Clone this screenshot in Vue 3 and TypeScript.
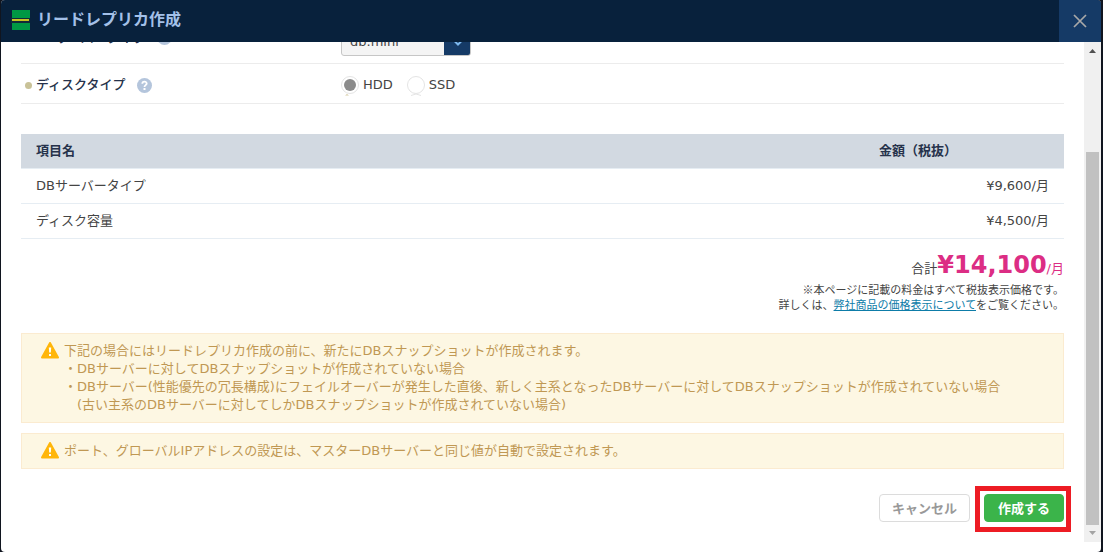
<script setup lang="ts">
import { ref } from 'vue'

interface PriceRow {
  name: string
  price: string
}

const serverType = ref<string>('db.mini')
const diskType = ref<string>('HDD')
const diskTypes: string[] = ['HDD', 'SSD']

const prices: PriceRow[] = [
  { name: 'DBサーバータイプ', price: '¥9,600/月' },
  { name: 'ディスク容量', price: '¥4,500/月' },
]
</script>

<template>
  <div class="backdrop">
    <section class="dialog" role="dialog" aria-labelledby="dialog-title">
      <header class="header">
        <svg class="logo" width="20" height="20" viewBox="0 0 20 20" aria-hidden="true">
          <rect x="1" y="0" width="18" height="8" fill="#009844" />
          <rect x="0" y="8" width="19" height="5" fill="#132a38" />
          <rect x="1" y="9" width="17" height="2" fill="#c5c522" />
          <rect x="1" y="13" width="18" height="7" fill="#009844" />
        </svg>
        <h1 id="dialog-title" class="title">リードレプリカ作成</h1>
        <button class="close" type="button" aria-label="閉じる">
          <svg width="14" height="14" viewBox="0 0 14 14" aria-hidden="true">
            <path d="M1 1L13 13M13 1L1 13" stroke="#a8a8a8" stroke-width="1.7" fill="none" />
          </svg>
        </button>
      </header>

      <div class="body">
        <div class="content">
          <div class="field field-scrolled">
            <div class="field-label field-label-top">
              <span class="dot"></span>
              <label for="server-type">DBサーバータイプ</label>
              <svg class="help" width="15" height="15" viewBox="0 0 15 15" aria-hidden="true">
                <circle cx="7.5" cy="7.5" r="7.5" fill="#b4c5dc" />
                <path d="M5.3 5.8C5.3 3 9.7 3 9.7 5.6C9.7 7.2 7.5 7.1 7.5 8.9" stroke="#fff" stroke-width="1.8" fill="none" />
                <rect x="6.5" y="10" width="2" height="2" fill="#fff" />
              </svg>
            </div>
            <div class="select">
              <select id="server-type" v-model="serverType">
                <option value="db.mini">db.mini</option>
              </select>
              <svg class="chevron" width="10" height="10" viewBox="0 0 10 10" aria-hidden="true">
                <path d="M1.5 3L5 6.5L8.5 3" stroke="#7db8ee" stroke-width="2" fill="none" />
              </svg>
            </div>
          </div>

          <div class="field" role="radiogroup" aria-labelledby="disk-label">
            <div class="field-label">
              <span class="dot"></span>
              <span id="disk-label">ディスクタイプ</span>
              <svg class="help" width="15" height="15" viewBox="0 0 15 15" aria-hidden="true">
                <circle cx="7.5" cy="7.5" r="7.5" fill="#b4c5dc" />
                <path d="M5.3 5.8C5.3 3 9.7 3 9.7 5.6C9.7 7.2 7.5 7.1 7.5 8.9" stroke="#fff" stroke-width="1.8" fill="none" />
                <rect x="6.5" y="10" width="2" height="2" fill="#fff" />
              </svg>
            </div>
            <label v-for="type in diskTypes" :key="type" class="radio">
              <input v-model="diskType" type="radio" name="disk" :value="type" />
              <svg width="18" height="22" viewBox="0 0 18 22" aria-hidden="true">
                <circle cx="9" cy="11" r="8.5" fill="#fff" stroke="#e4e4e4" />
                <template v-if="diskType === type">
                  <circle cx="9" cy="11" r="6" fill="#8b8b8b" />
                  <path d="M4 21.5L6 20L8 21.5" fill="#d5cba4" />
                </template>
                <path v-else d="M4 21.5Q9 18.5 14 21.5" stroke="#e4e4e4" fill="none" />
              </svg>
              <span>{{ type }}</span>
            </label>
          </div>

          <table class="prices">
            <thead>
              <tr>
                <th scope="col">項目名</th>
                <th scope="col" class="amount-head">金額（税抜）</th>
              </tr>
            </thead>
            <tbody>
              <tr v-for="row in prices" :key="row.name">
                <td>{{ row.name }}</td>
                <td class="amount">{{ row.price }}</td>
              </tr>
            </tbody>
          </table>

          <p class="total">合計<span class="pink"><strong>¥14,100</strong>/月</span></p>
          <p class="tax">
            ※本ページに記載の料金はすべて税抜表示価格です。<br />
            詳しくは、<a href="#">弊社商品の価格表示について</a>をご覧ください。
          </p>

          <div class="notice">
            <svg class="warn" width="18" height="17" viewBox="0 0 18 17" aria-hidden="true">
              <path d="M9 1L17 15.5H1Z" fill="#ffb60a" stroke="#ffb60a" stroke-width="2" stroke-linejoin="round" />
              <path d="M7.8 5.5H10.2L9.8 10.5H8.2Z" fill="#fff" />
              <rect x="8" y="12" width="2" height="2" fill="#fff" />
            </svg>
            <div>
              <p>下記の場合にはリードレプリカ作成の前に、新たにDBスナップショットが作成されます。</p>
              <p>・DBサーバーに対してDBスナップショットが作成されていない場合</p>
              <p>・DBサーバー(性能優先の冗長構成)にフェイルオーバーが発生した直後、新しく主系となったDBサーバーに対してDBスナップショットが作成されていない場合</p>
              <p class="indent">(古い主系のDBサーバーに対してしかDBスナップショットが作成されていない場合)</p>
            </div>
          </div>
          <div class="notice">
            <svg class="warn" width="18" height="17" viewBox="0 0 18 17" aria-hidden="true">
              <path d="M9 1L17 15.5H1Z" fill="#ffb60a" stroke="#ffb60a" stroke-width="2" stroke-linejoin="round" />
              <path d="M7.8 5.5H10.2L9.8 10.5H8.2Z" fill="#fff" />
              <rect x="8" y="12" width="2" height="2" fill="#fff" />
            </svg>
            <p>ポート、グローバルIPアドレスの設定は、マスターDBサーバーと同じ値が自動で設定されます。</p>
          </div>

          <div class="actions">
            <button class="btn cancel" type="button">キャンセル</button>
            <div class="marked">
              <button class="btn create" type="button">作成する</button>
            </div>
          </div>
        </div>

        <div class="scrollbar" aria-hidden="true">
          <svg width="17" height="17" viewBox="0 0 17 17"><path d="M5 11L8.5 7L12 11Z" fill="#505050" /></svg>
          <div class="track"><div class="thumb"></div></div>
          <svg width="17" height="17" viewBox="0 0 17 17"><path d="M5 6L8.5 10L12 6Z" fill="#a3a3a3" /></svg>
        </div>
      </div>
    </section>
  </div>
</template>

<style>
body {
  margin: 0;
}
</style>

<style scoped>
.backdrop {
  display: flex;
  box-sizing: border-box;
  min-height: 100vh;
  padding: 0 2px 0 1px;
  background: #10151f;
  color: #444;
  font: 13px/18px "DejaVu Sans", "Noto Sans CJK JP", sans-serif;
}
.dialog {
  display: flex;
  flex: 1;
  flex-direction: column;
  min-width: 0;
  border-radius: 4px;
  background: #fff;
  overflow: hidden;
}
.header {
  display: flex;
  align-items: center;
  height: 42px;
  padding-left: 10px;
  background: #08213c;
}
.logo {
  margin-bottom: 2px;
}
.title {
  flex: 1;
  margin: 0 0 2px 6px;
  color: #a3c0e8;
  font-size: 16px;
  line-height: 20px;
}
.close {
  display: flex;
  align-items: center;
  justify-content: center;
  width: 42px;
  height: 42px;
  padding: 0;
  border: 0;
  background: #153a66;
}
.body {
  display: flex;
  flex: 1;
  margin-bottom: 10px;
  overflow: hidden;
}
.content {
  flex: 1;
  min-width: 0;
  padding: 0 20px;
}
.field {
  display: flex;
  align-items: center;
  box-sizing: border-box;
  height: 40px;
  padding: 3px 0 0 4px;
  border-bottom: 1px solid #ececec;
}
.field-scrolled {
  margin-top: -18px;
  padding-top: 0;
}
.field-label {
  display: flex;
  align-items: center;
  width: 316px;
  color: #26324b;
  font-weight: 500;
}
.field-label-top {
  padding-bottom: 12px;
}
.dot {
  width: 7px;
  height: 7px;
  margin-right: 4px;
  border-radius: 50%;
  background: #c9c298;
}
.help {
  margin-left: 11px;
}
.select {
  position: relative;
  width: 130px;
  height: 28px;
  padding-bottom: 4px;
}
.select select {
  width: 100%;
  height: 28px;
  padding: 0 8px;
  border: 1px solid #c6c6c6;
  border-radius: 3px;
  appearance: none;
  background: linear-gradient(to left, #153a66 26px, #f4f4f4 26px);
  color: #444;
  font: inherit;
}
.chevron {
  position: absolute;
  top: 10px;
  right: 8px;
  pointer-events: none;
}
.radio {
  position: relative;
  display: flex;
  align-items: center;
  gap: 4px;
  margin-right: 14px;
}
.radio input {
  position: absolute;
  left: 0;
  width: 18px;
  height: 18px;
  margin: 0;
  opacity: 0;
}
.prices {
  width: 100%;
  margin-top: 30px;
  border-collapse: collapse;
}
.prices th,
.prices td {
  height: 34px;
  padding: 0 15px;
  border-bottom: 1px solid #e6edf3;
  text-align: left;
}
.prices th {
  background: #d2d9e1;
  color: #26324b;
}
.prices .amount-head {
  width: 170px;
}
.prices .amount {
  text-align: right;
}
p {
  margin: 0;
}
.total {
  margin-top: 13px;
  line-height: 26px;
  text-align: right;
}
.pink {
  color: #dc2d84;
}
.total strong {
  font-size: 24px;
}
.tax {
  margin-bottom: 21px;
  font: 11px/15px "Noto Sans CJK JP", sans-serif;
  text-align: right;
}
.tax a {
  color: #0d7ca8;
}
.notice {
  display: flex;
  gap: 5px;
  margin-bottom: 10px;
  padding: 8px 19px;
  border: 1px solid #fbebd0;
  background: #fdf7e3;
  color: #c09853;
}
.warn {
  flex: none;
}
.indent {
  padding-left: 13px;
}
.actions {
  display: flex;
  justify-content: flex-end;
  gap: 14px;
  margin-top: 25px;
}
.btn {
  box-sizing: border-box;
  height: 28px;
  padding: 0 12px;
  border: 1px solid #dcdcdc;
  border-radius: 4px;
  background: #fff;
  color: #999;
  font: bold 13px/18px "Noto Sans CJK JP", sans-serif;
}
.create {
  padding: 0 13px;
  border-color: #3bb44a;
  background: #3bb44a;
  color: #fff;
}
.marked {
  position: relative;
}
.marked::after {
  position: absolute;
  inset: -8px -7px -10px -9px;
  border: 5px solid #ed1c24;
  content: "";
  pointer-events: none;
}
.scrollbar {
  display: flex;
  flex-direction: column;
  width: 17px;
  background: #f0f0f0;
}
.track {
  display: flex;
  flex: 1;
  flex-direction: column;
  justify-content: flex-end;
  padding: 0 2px;
}
.thumb {
  height: 80%;
  background: #c1c1c1;
}
</style>
